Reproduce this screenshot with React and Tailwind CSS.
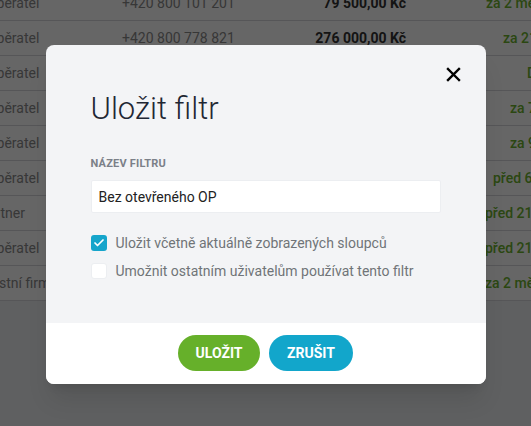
import { Check } from 'lucide-react';

const rows = [
  { type: 'Odběratel', phone: '+420 800 101 201', amount: '79 500,00 Kč', when: 'za 2 měsíce', pad: 'pl-[16px]' },
  { type: 'Odběratel', phone: '+420 800 778 821', amount: '276 000,00 Kč', when: 'za 21 dní', pad: 'pl-[33px]' },
  { type: 'Odběratel', phone: '+420 800 312 455', amount: '12 300,00 Kč', when: 'Dnes', pad: 'pl-[57px]' },
  { type: 'Odběratel', phone: '+420 800 640 118', amount: '54 000,00 Kč', when: 'za 7 dní', pad: 'pl-[40px]' },
  { type: 'Odběratel', phone: '+420 800 220 907', amount: '8 900,00 Kč', when: 'za 9 dní', pad: 'pl-[40px]' },
  { type: 'Odběratel', phone: '+420 800 515 330', amount: '143 200,00 Kč', when: 'před 6 dny', pad: 'pl-[23px]' },
  { type: 'Partner', phone: '+420 800 903 774', amount: '31 000,00 Kč', when: 'před 21 dny', pad: 'pl-[15px]' },
  { type: 'Odběratel', phone: '+420 800 457 026', amount: '67 800,00 Kč', when: 'před 21 dny', pad: 'pl-[15px]' },
  { type: 'Vlastní firma', phone: '+420 800 118 652', amount: '19 450,00 Kč', when: 'za 2 měsíce', pad: 'pl-[15px]' },
];

function Table() {
  return (
    <div className="-mt-[14px] -ml-[21px] w-[680px]">
      {rows.map((r, i) => (
        <div key={i} className="flex h-[35px] items-center border-b border-[#d6d8db] bg-white text-[14px]">
          <div className="w-[143px] shrink-0 whitespace-nowrap text-[#8a8a8a]">{r.type}</div>
          <div className="w-[140px] shrink-0 whitespace-nowrap text-[#8a8a8a]">{r.phone}</div>
          <div className="w-[144px] shrink-0 whitespace-nowrap text-right font-bold text-[#333]">{r.amount}</div>
          <div className={`ml-[64px] w-[170px] shrink-0 ${r.pad} whitespace-nowrap font-medium text-[#6cb22e]`}>{r.when}</div>
        </div>
      ))}
    </div>
  );
}

function CheckRow({ checked, label }) {
  return (
    <label className="flex h-[28px] items-center gap-[9px]">
      <span
        className={
          checked
            ? 'flex h-[16px] w-[16px] items-center justify-center rounded-[3px] bg-[#16a5cb]'
            : 'h-[16px] w-[16px] rounded-[3px] border border-[#eceef1] bg-white'
        }
      >
        {checked && <Check className="h-[12px] w-[12px] text-white" strokeWidth={3.5} />}
      </span>
      <span className="text-[14px] text-[#707478]">{label}</span>
    </label>
  );
}

export default function App() {
  return (
    <div className="relative h-[426px] w-[531px] overflow-hidden bg-[#eef0f3] font-['Roboto',sans-serif]">
      <Table />

      <div className="absolute inset-0 flex items-start justify-center bg-black/60 pt-[45px]">
        <div className="relative w-[440px] overflow-hidden rounded-lg bg-[#f3f4f6] shadow-xl">
          <button className="absolute right-[24px] top-[21px] flex h-[16px] w-[16px] items-center justify-center text-black">
            <svg width="15" height="15" viewBox="0 0 15 15" fill="none" stroke="currentColor" strokeWidth="2.4" strokeLinecap="square">
              <path d="M2 2L13 13M13 2L2 13" />
            </svg>
          </button>

          <div className="px-[45px] pt-[46px] pb-[38px]">
            <h2 className="text-[31px] leading-[36px] font-light text-[#1f2733]">Uložit filtr</h2>

            <div className="mt-[29px] text-[11px] leading-[16px] font-bold tracking-[0.2px] text-[#7b8088]">NÁZEV FILTRU</div>
            <input
              type="text"
              defaultValue="Bez otevřeného OP"
              className="mt-[8px] h-[33px] w-full rounded-[2px] border border-[#eceef1] bg-white px-[7px] text-[14px] text-[#222] outline-none"
            />

            <div className="mt-[16px]">
              <CheckRow checked label="Uložit včetně aktuálně zobrazených sloupců" />
              <CheckRow label="Umožnit ostatním uživatelům používat tento filtr" />
            </div>
          </div>

          <div className="flex justify-center gap-[9px] bg-white pt-[12px] pb-[13px]">
            <button className="h-[36px] w-[82px] rounded-full bg-[#66b02a] text-[14px] font-bold text-white">ULOŽIT</button>
            <button className="h-[36px] w-[84px] rounded-full bg-[#12a6cb] text-[14px] font-bold text-white">ZRUŠIT</button>
          </div>
        </div>
      </div>
    </div>
  );
}
